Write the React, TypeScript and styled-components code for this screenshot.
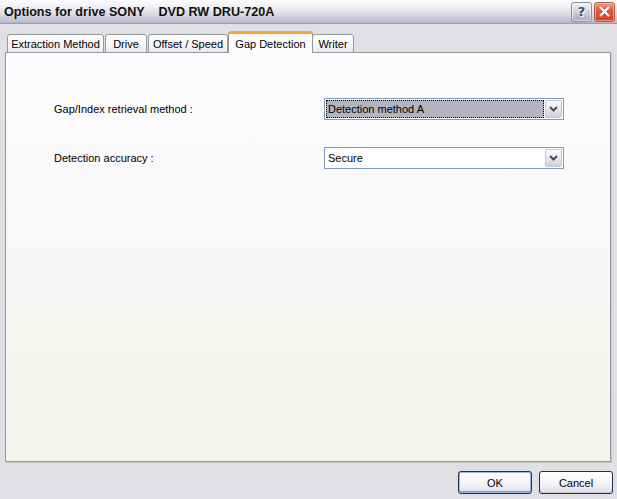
import React from "react";
import styled, { createGlobalStyle } from "styled-components";

const GlobalStyle = createGlobalStyle`
  html, body {
    margin: 0;
    padding: 0;
    background: #e0dfe3;
  }
  body {
    font-family: "Liberation Sans", Arial, sans-serif;
    font-size: 11px;
    color: #000;
  }
`;

const Window = styled.div`
  width: 617px;
  height: 499px;
  display: flex;
  flex-direction: column;
  background: #e0dfe3;
  overflow: hidden;
`;

const TitleBar = styled.div`
  height: 23px;
  flex: none;
  display: flex;
  align-items: center;
  padding: 0 2px 0 4px;
  border-bottom: 1px solid #9c9cb2;
  background: linear-gradient(#fdfdfe 0%, #f0f0f4 30%, #dcdce5 60%, #c6c6d5 85%, #b4b4c6 100%);
`;

const Title = styled.div`
  flex: 1;
  font-family: "Liberation Sans", Arial, sans-serif;
  font-weight: bold;
  font-size: 12.6px;
  color: #111;
  white-space: pre;
  padding-top: 1px;
`;

const CaptionButton = styled.div<{ $close?: boolean }>`
  width: 19px;
  height: 18px;
  margin-left: 2px;
  border: 1px solid ${({ $close }) => ($close ? "#b35a4c" : "#8a8aa6")};
  border-radius: 3px;
  display: flex;
  align-items: center;
  justify-content: center;
  background: ${({ $close }) =>
    $close
      ? "linear-gradient(#f0a08a, #e25b3f 40%, #cf3f24 100%)"
      : "linear-gradient(#f4f4f8, #d4d4e0 45%, #a9a9c0 100%)"};
  box-shadow: inset 0 0 0 1px ${({ $close }) => ($close ? "rgba(255,200,190,0.6)" : "rgba(255,255,255,0.6)")};
  color: #4a4a66;
  font-family: "DejaVu Sans", sans-serif;
  font-weight: bold;
  font-size: 13px;
  text-shadow: 1px 1px 0 #fff;
`;

const Body = styled.div`
  flex: 1;
  display: flex;
  flex-direction: column;
  padding: 7px 6px 0 5px;
`;

const TabRow = styled.div`
  height: 22px;
  display: flex;
  align-items: flex-end;
  padding-left: 2px;
  position: relative;
  z-index: 1;
`;

const Tab = styled.div<{ $active?: boolean; $width: number }>`
  box-sizing: border-box;
  width: ${({ $width }) => $width}px;
  height: ${({ $active }) => ($active ? "22px" : "19px")};
  padding-top: ${({ $active }) => ($active ? "3px" : "2px")};
  margin: ${({ $active }) => ($active ? "0 -1px 0 -1px" : "0 1px 0 0")};
  border: 1px solid #919b9c;
  border-bottom: ${({ $active }) => ($active ? "none" : "1px solid #919b9c")};
  border-top: ${({ $active }) => ($active ? "3px solid #f5a638" : "1px solid #919b9c")};
  border-radius: 3px 3px 0 0;
  background: ${({ $active }) =>
    $active ? "#fcfcfe" : "linear-gradient(#ffffff, #f3f3f6 70%, #e6e6ec)"};
  text-align: center;
  white-space: nowrap;
  line-height: 14px;
  position: relative;
  z-index: ${({ $active }) => ($active ? 2 : 0)};
`;

const Panel = styled.div`
  box-sizing: border-box;
  height: 410px;
  margin-top: -1px;
  border: 1px solid #919b9c;
  box-shadow: 1px 1px 0 #c8c8b8;
  background: linear-gradient(#fcfcfe, #f4f3ee);
  padding: 45px 0 0 48px;
  display: grid;
  grid-template-columns: 270px 240px;
  grid-auto-rows: 22px;
  row-gap: 27px;
  align-content: start;
`;

const Label = styled.div`
  display: flex;
  align-items: center;
  white-space: nowrap;
`;

const Combo = styled.div`
  box-sizing: border-box;
  height: 22px;
  border: 1px solid #7f9db9;
  background: #fff;
  display: flex;
  align-items: center;
  padding: 1px;
  gap: 1px;
`;

const ComboText = styled.div<{ $focused?: boolean }>`
  flex: 1;
  height: 18px;
  box-sizing: border-box;
  display: flex;
  align-items: center;
  padding-left: 2px;
  background: ${({ $focused }) => ($focused ? "#b2b4bf" : "transparent")};
  outline: ${({ $focused }) => ($focused ? "1px dotted #000" : "none")};
  outline-offset: -1px;
`;

const ComboButton = styled.div`
  width: 17px;
  height: 18px;
  box-sizing: border-box;
  border: 1px solid #c3c3d2;
  border-radius: 2px;
  background: linear-gradient(#fbfbfd, #e3e3ec 60%, #cfcfdc);
  display: flex;
  align-items: center;
  justify-content: center;
`;

const Footer = styled.div`
  display: flex;
  justify-content: flex-end;
  gap: 7px;
  padding: 9px 4px 5px 0;
`;

const Button = styled.div<{ $default?: boolean }>`
  box-sizing: border-box;
  width: 74px;
  height: 23px;
  border: 1px solid #1c2f5a;
  border-radius: 3px;
  background: linear-gradient(#ffffff, #f3f3f6 60%, #dcdce4);
  box-shadow: ${({ $default }) =>
    $default ? "inset 0 0 0 1px #9ab6e8, inset 0 -1px 0 1px #7ea0de" : "inset 0 -1px 0 #c8c8d4"};
  display: flex;
  align-items: center;
  justify-content: center;
`;

const Chevron = () => (
  <svg width="9" height="6" viewBox="0 0 9 6">
    <path d="M1 1 L4.5 4.5 L8 1" fill="none" stroke="#4b4b5e" strokeWidth="2" />
  </svg>
);

const CloseGlyph = () => (
  <svg width="11" height="11" viewBox="0 0 11 11">
    <path d="M1.5 1.5 L9.5 9.5 M9.5 1.5 L1.5 9.5" stroke="#fff" strokeWidth="2" strokeLinecap="round" />
  </svg>
);

const tabs = [
  { label: "Extraction Method", width: 97 },
  { label: "Drive", width: 42 },
  { label: "Offset / Speed", width: 80 },
  { label: "Gap Detection", width: 85 },
  { label: "Writer", width: 42 },
];

const App = () => {
  return (
    <Window>
      <GlobalStyle />
      <TitleBar>
        <Title>{"Options for drive SONY    DVD RW DRU-720A"}</Title>
        <CaptionButton>?</CaptionButton>
        <CaptionButton $close>
          <CloseGlyph />
        </CaptionButton>
      </TitleBar>
      <Body>
        <TabRow>
          {tabs.map((t) => (
            <Tab key={t.label} $width={t.width} $active={t.label === "Gap Detection"}>
              {t.label}
            </Tab>
          ))}
        </TabRow>
        <Panel>
          <Label>Gap/Index retrieval method :</Label>
          <Combo>
            <ComboText $focused>Detection method A</ComboText>
            <ComboButton>
              <Chevron />
            </ComboButton>
          </Combo>
          <Label>Detection accuracy :</Label>
          <Combo>
            <ComboText>Secure</ComboText>
            <ComboButton>
              <Chevron />
            </ComboButton>
          </Combo>
        </Panel>
      </Body>
      <Footer>
        <Button $default>OK</Button>
        <Button>Cancel</Button>
      </Footer>
    </Window>
  );
};

export default App;
